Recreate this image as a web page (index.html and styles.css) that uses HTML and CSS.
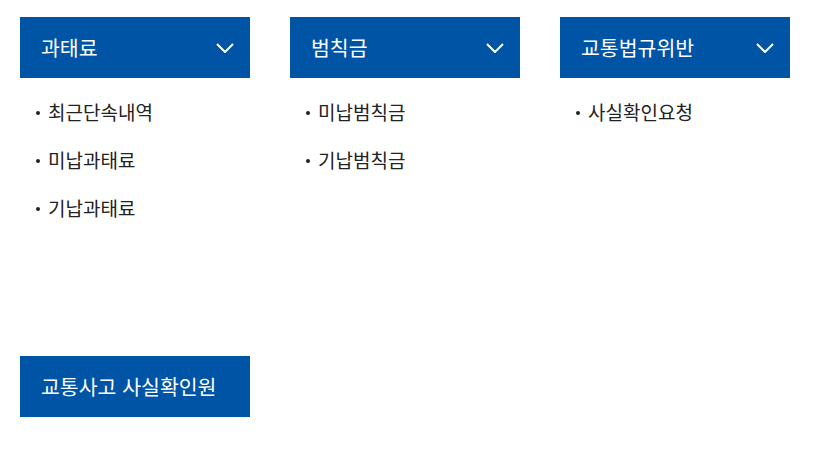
FILE: index.html
```html
<!DOCTYPE html>
<html lang="ko">
<head>
<meta charset="utf-8">
<title>과태료 안내</title>
<link rel="stylesheet" href="styles.css">
</head>
<body>
<div class="menu">
	<div class="group">
		<div class="head"><span>과태료</span>
			<svg class="chev" width="18" height="10" viewBox="0 0 18 10"><path d="M1 1l8 8 8-8" fill="none" stroke="#fff" stroke-width="2"/></svg>
		</div>
		<ul class="sub">
			<li>최근단속내역</li>
			<li>미납과태료</li>
			<li>기납과태료</li>
		</ul>
	</div>
	<div class="group">
		<div class="head"><span>범칙금</span>
			<svg class="chev" width="18" height="10" viewBox="0 0 18 10"><path d="M1 1l8 8 8-8" fill="none" stroke="#fff" stroke-width="2"/></svg>
		</div>
		<ul class="sub">
			<li>미납범칙금</li>
			<li>기납범칙금</li>
		</ul>
	</div>
	<div class="group">
		<div class="head"><span>교통법규위반</span>
			<svg class="chev" width="18" height="10" viewBox="0 0 18 10"><path d="M1 1l8 8 8-8" fill="none" stroke="#fff" stroke-width="2"/></svg>
		</div>
		<ul class="sub">
			<li>사실확인요청</li>
		</ul>
	</div>
	<div class="group">
		<div class="head"><span>교통사고 사실확인원</span></div>
	</div>
</div>
</body>
</html>
```

FILE: styles.css
```css
body {
	margin: 0;
	background: #fff;
	font-family: "Noto Sans CJK KR", "Noto Sans", sans-serif;
}

.menu {
	display: grid;
	grid-template-columns: repeat(3, 230px);
	column-gap: 40px;
	row-gap: 124px;
	padding: 17px 20px;
}

.head {
	height: 61px;
	background: #0054a6;
	color: #fff;
	font-size: 20.5px;
	display: flex;
	align-items: center;
	justify-content: space-between;
	padding: 0 16px 0 21px;
}

.head span { margin-top: -2px; }

.chev { display: block; margin-top: 1px; }

.sub {
	list-style: none;
	margin: 0;
	padding: 10px 0 0 16px;
}

.sub li {
	height: 48px;
	line-height: 48px;
	font-size: 19px;
	color: #222;
	position: relative;
	padding-left: 12px;
}

.sub li::before {
	content: "";
	position: absolute;
	left: 0;
	top: 23px;
	width: 4px;
	height: 4px;
	border-radius: 50%;
	background: #222;
}
```
